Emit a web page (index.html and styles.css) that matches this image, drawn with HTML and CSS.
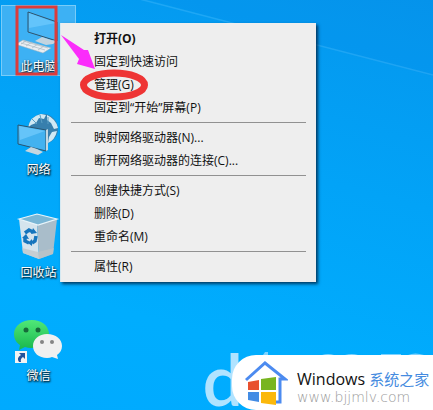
FILE: index.html
```
<!DOCTYPE html>
<html lang="zh-CN">
<head>
    <meta charset="UTF-8">
    <meta name="viewport" content="width=device-width, initial-scale=1.0">
    <title>桌面</title>
    <link rel="stylesheet" href="styles.css">
</head>
<body>
    <main class="desktop">
        <svg class="light-rays" viewBox="0 0 433 410" preserveAspectRatio="none" aria-hidden="true">
            <path d="M150 0 L433 76 V0 Z" fill="#0878d8" opacity=".08"/>
            <path d="M120 -6 L433 75" stroke="#5cc4ff" stroke-width="1.5" opacity=".3"/>
        </svg>

        <nav class="icons">
            <a class="icon selected" href="#pc">
                <svg viewBox="0 0 75 48" aria-hidden="true">
                    <path d="M27 7 L56 17 V36 L27 27 Z" fill="#48b5f5" stroke="#31536b" stroke-width="1"/>
                    <path d="M28 8 L55 18 L28 23 Z" fill="#76ceff" opacity=".6"/>
                    <path d="M41 32 L50 35 L56 36 L52 39 L45 40 L34 36 Z" fill="#c3d4df"/>
                    <path d="M17 38 L22 35 L50 43 L42 48 L17 40 Z" fill="#e9eef2" stroke="#9dafba" stroke-width=".5"/>
                    <path d="M20 38 L44 45 M22 36 L47 43 M25 36 L20 39 M31 37 L25 41 M37 39 L31 43 M43 41 L37 45" stroke="#a9b7c0" stroke-width=".7"/>
                </svg>
                <span>此电脑</span>
            </a>
            <a class="icon" href="#network">
                <svg viewBox="0 0 75 48" aria-hidden="true">
                    <circle cx="42" cy="21" r="15" fill="#377fad"/>
                    <path d="M27 20 Q29 8 40 6 L45 7 L43 11 L38 10 L35 15 L30 17 Z M46 7 Q55 11 57 20 L53 21 L50 15 L46 12 Z M51 24 L56 23 Q54 32 47 35 L48 29 Z" fill="#cfe9f5"/>
                    <path d="M31 11 L36 16 M39 7 L41 15 M47 9 L47 16" stroke="#5b9fc5" stroke-width="1"/>
                    <path d="M17 17 L45 22 V43 L17 36 Z" fill="#43b2f0" stroke="#2b546f" stroke-width="1"/>
                    <path d="M18 18 L44 23 L19 32 Z" fill="#7dd0ff" opacity=".6"/>
                    <path d="M45 22 L47 21 V42 L45 43 Z" fill="#c2d7e2"/>
                    <path d="M30 39 L36 41 L42 44 L37 47 L24 43 Z" fill="#c5d6df"/>
                </svg>
                <span>网络</span>
            </a>
            <a class="icon" href="#recycle">
                <svg viewBox="0 0 75 48" aria-hidden="true">
                    <path d="M18 8 L36 13 L38 48 L22 42 Z" fill="#d5e4ed"/>
                    <path d="M36 13 L56 8 L52 43 L38 48 Z" fill="#a9bdca"/>
                    <path d="M18 8 L36 3 L56 8 L37 14 Z" fill="#7ab6d5" stroke="#e8f4fa" stroke-width="1.2"/>
                    <path d="M21 37 L37 41 L53 37 L52 43 L38 48 L22 42 Z" fill="#bdc4c8" opacity=".7"/>
                    <g fill="none" stroke="#1575bd" stroke-width="3.5">
                        <path d="M24 22 L28 19 L32 21"/>
                        <path d="M35 25 L34 30 L31 32"/>
                        <path d="M28 32 L24 30 L24 27"/>
                    </g>
                    <path d="M32 17 L36 22 L30 23 Z M31 28 L31 35 L27 32 Z M21 27 L25 23 L28 28 Z" fill="#1575bd"/>
                </svg>
                <span>回收站</span>
            </a>
            <a class="icon" href="#wechat">
                <svg viewBox="0 0 75 48" aria-hidden="true">
                    <defs>
                        <linearGradient id="chat" x1="0" y1="0" x2="0" y2="1">
                            <stop offset="0" stop-color="#50e878"/>
                            <stop offset="1" stop-color="#19b74d"/>
                        </linearGradient>
                    </defs>
                    <path d="M31 6 C21 6 13 12 13 20 C13 26 16 29 19 31 L18 36 L24 33 Q30 35 36 33 C44 31 48 25 48 19 C47 11 40 6 31 6 Z" fill="url(#chat)"/>
                    <circle cx="25" cy="16" r="2.5" fill="#166b39"/>
                    <circle cx="37" cy="16" r="2.5" fill="#166b39"/>
                    <path d="M46 20 C38 20 32 25 32 32 C32 39 38 44 46 44 Q49 44 51 43 L57 45 L56 41 C59 39 61 36 61 32 C61 25 55 20 46 20 Z" fill="#f0f0f0"/>
                    <circle cx="41" cy="28" r="2" fill="#858585"/>
                    <circle cx="51" cy="28" r="2" fill="#858585"/>
                    <path d="M14 37 H26 V49 H14 Z" fill="#f3f3f3"/>
                    <path d="M18 39 H24 V45 L22 43 Q19 45 20 48 L18 48 Q15 44 20 41 Z" fill="#24539b"/>
                </svg>
                <span>微信</span>
            </a>
        </nav>

        <div class="menu" role="menu">
            <button class="default" role="menuitem">打开(O)</button>
            <button role="menuitem">固定到快速访问</button>
            <button role="menuitem">管理(G)</button>
            <button role="menuitem">固定到“开始”屏幕(P)</button>
            <hr>
            <button role="menuitem">映射网络驱动器(N)...</button>
            <button role="menuitem">断开网络驱动器的连接(C)...</button>
            <hr>
            <button role="menuitem">创建快捷方式(S)</button>
            <button role="menuitem">删除(D)</button>
            <button role="menuitem">重命名(M)</button>
            <hr>
            <button role="menuitem">属性(R)</button>
        </div>

        <!-- 标注 -->
        <svg class="marks" viewBox="0 0 160 110" aria-hidden="true">
            <rect x="17" y="7" width="39" height="67" fill="none" stroke="#dc3b3b" stroke-width="3"/>
            <path d="M61 35 L84 50 L88 50 L95 69 L77 64 L79 59 Z" fill="#fb2cfb"/>
            <ellipse cx="114" cy="85" rx="30.5" ry="12" fill="none" stroke="#ee3434" stroke-width="7"/>
        </svg>

        <span class="watermark">d</span>
        <footer class="brand">
            <!-- 卡片上沿露出的水印 -->
            <svg class="traces" viewBox="0 0 201 4" aria-hidden="true">
                <path d="M31 4 L33 1 H36 V4 Z M90 4 Q96 2 102 4 Z M113 4 Q120 2 126 4 Z M149 4 V3 H169 V4 Z M176 4 Q183 1 192 4 Z" fill="#b0e3ff" opacity=".7"/>
            </svg>
            <svg class="logo" viewBox="0 0 44 44" aria-hidden="true">
                <path d="M2 19 L21 2 L41 18 H36 V41 H28" fill="none" stroke="#4c8bf0" stroke-width="3"/>
                <path d="M4 21 L15 19 V29 H4 Z" fill="#e8502f"/>
                <path d="M17 18 L32 16 V29 H17 Z" fill="#78b520"/>
                <path d="M4 31 H15 V41 L4 39 Z" fill="#438ce4"/>
                <path d="M17 31 H32 V44 L17 42 Z" fill="#fbb80b"/>
            </svg>
            <div>
                <p class="name">Windows <b>系统之家</b></p>
                <a class="url" href="#home">www.bjjmlv.com</a>
            </div>
        </footer>
    </main>
</body>
</html>
```

FILE: styles.css
```
* {
    margin: 0;
    padding: 0;
    box-sizing: border-box;
}

body {
    font-family: 'Open Sans', 'Noto Sans CJK SC', sans-serif;
    font-size: 12px;
    color: #111;
}

.desktop {
    position: relative;
    min-height: 100vh;
    padding: 5px 1px;
    overflow: hidden;
    background: linear-gradient(195deg, #0596ed 0%, #02a3f7 40%, #00adfe 75%, #00aaff 100%);
}

.light-rays {
    position: absolute;
    inset: 0;
    width: 100%;
    height: 100%;
}

.icons {
    position: relative;
    display: flex;
    flex-direction: column;
    gap: 32px;
    width: 75px;
}

.icon {
    display: block;
    height: 71px;
    color: #fff;
    text-align: center;
    text-decoration: none;
    text-shadow: 1px 1px 2px #000, 0 1px 2px rgba(0,0,0,0.6);
}

.icon svg {
    display: block;
    width: 75px;
    height: 48px;
    margin-bottom: 5px;
    overflow: visible;
}

.icon span {
    display: block;
    line-height: 18px;
}

.selected {
    background: #3db1f4;
    outline: 1px solid #78ccf8;
    outline-offset: -1px;
}

.menu {
    position: absolute;
    top: 23px;
    left: 60px;
    width: 256px;
    padding: 4px 10px;
    background: #eee;
    border-left: 1px solid #d5e9f2;
    box-shadow: 2px 2px 3px rgba(0,30,60,0.8);
}

.menu button {
    display: block;
    width: 100%;
    height: 23px;
    padding-left: 23px;
    border: none;
    background: none;
    color: #111;
    font: inherit;
    line-height: 23px;
    text-align: left;
    white-space: nowrap;
}

.menu .default {
    font-weight: bold;
}

.menu hr {
    height: 1px;
    margin: 3px 0;
    border: none;
    background: #919191;
}

.marks {
    position: absolute;
    top: 0;
    left: 0;
    width: 160px;
    height: 110px;
    pointer-events: none;
}

.watermark {
    position: absolute;
    right: 190px;
    bottom: 0;
    color: #b0e3ff;
    font-family: Lato, sans-serif;
    font-size: 72px;
    font-weight: 600;
    line-height: 64px;
}

.brand {
    position: absolute;
    right: 0;
    bottom: 0;
    display: flex;
    gap: 9px;
    width: 201px;
    height: 55px;
    padding: 6px 0 0 12px;
    background: #fff;
    border-radius: 24px 0 0 24px;
}

.traces {
    position: absolute;
    left: 0;
    bottom: 100%;
    width: 201px;
    height: 4px;
}

.logo {
    width: 44px;
    height: 44px;
}

.name {
    padding-top: 8px;
    color: #111;
    font-size: 16px;
    line-height: 20px;
    white-space: nowrap;
}

.name b {
    color: #458be0;
    font-size: 15px;
    font-weight: 400;
}

.url {
    display: block;
    color: #999;
    font-family: 'DejaVu Sans', sans-serif;
    font-size: 14px;
    font-weight: 200;
    line-height: 16px;
    text-decoration: none;
}
```
